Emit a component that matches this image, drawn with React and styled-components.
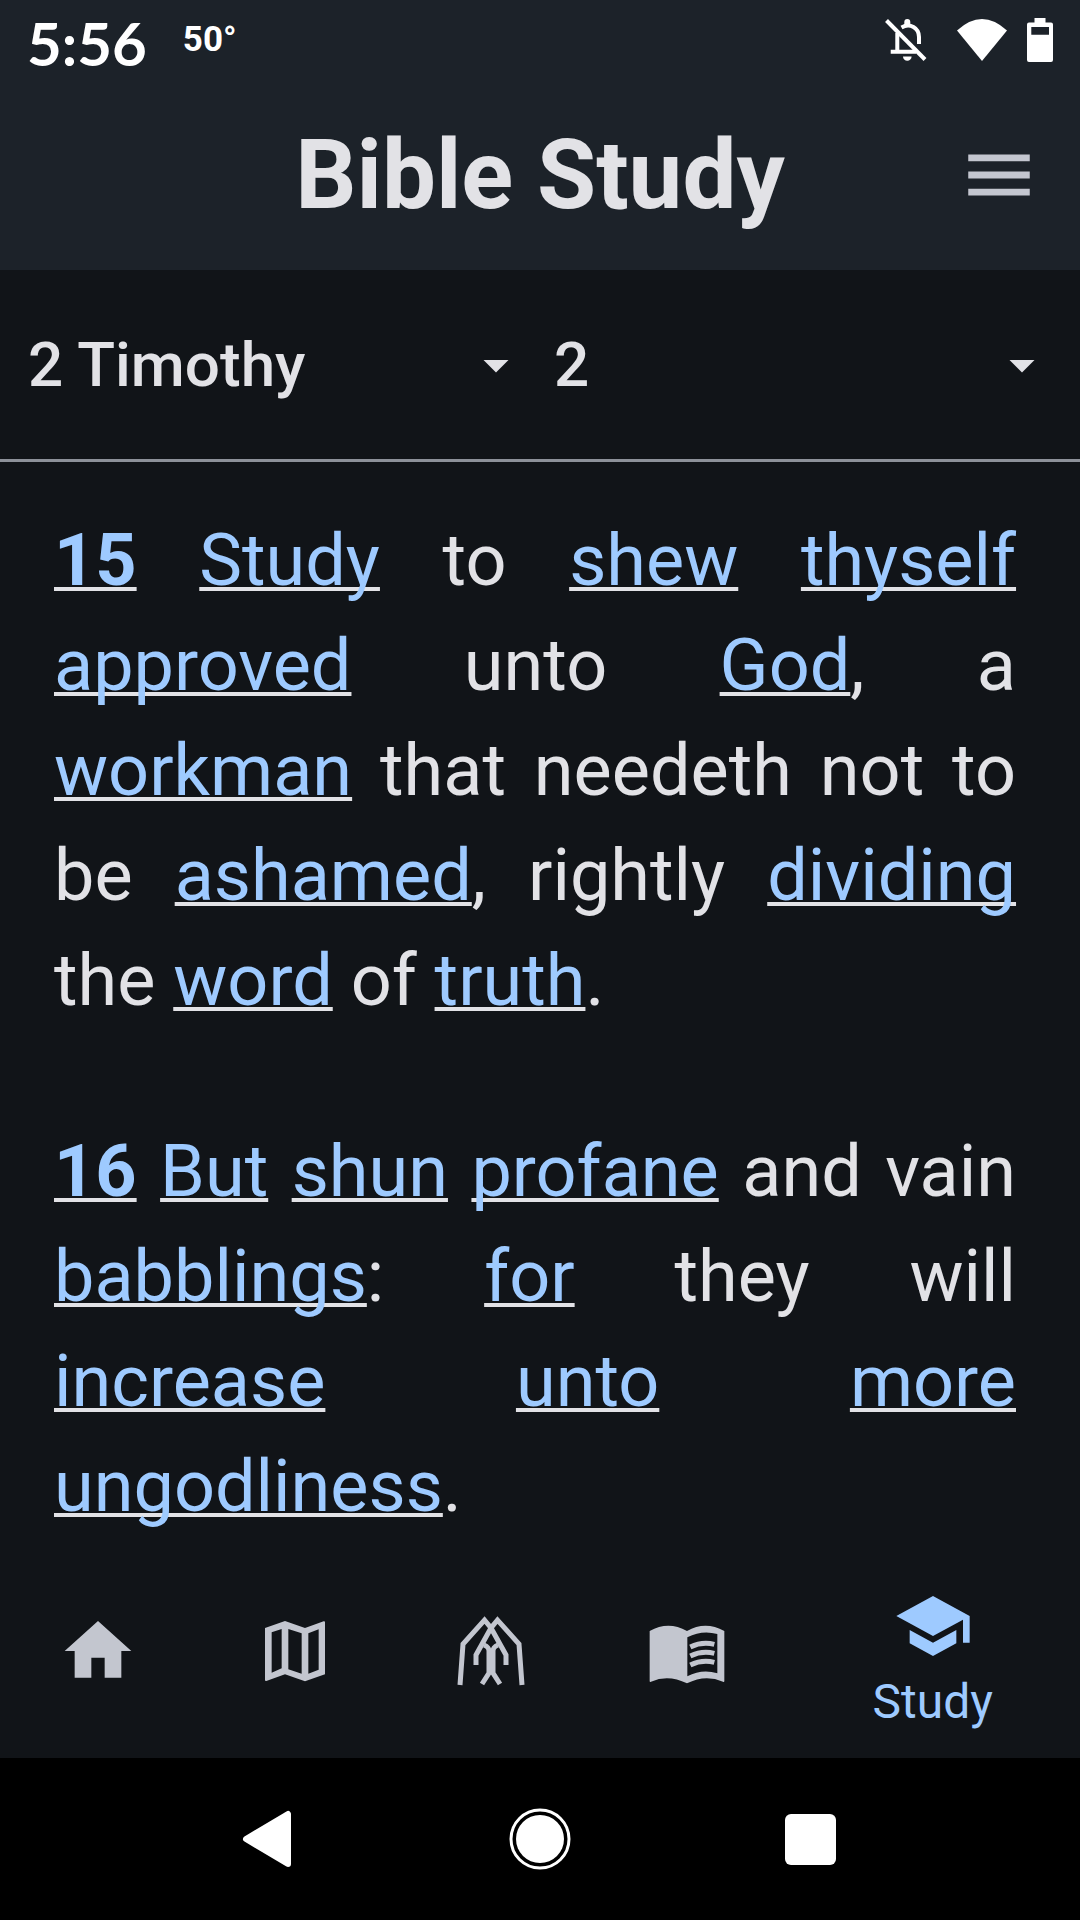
import React from 'react';
import styled, { createGlobalStyle } from 'styled-components';

const color = {
  bar: '#1c2229',
  surface: '#111418',
  text: '#e2e2e6',
  link: '#9ecaff',
  muted: '#c3c6cf',
  outline: '#8d9199',
};

const GlobalStyle = createGlobalStyle`
  *, *::before, *::after { box-sizing: border-box; }
  body { margin: 0; background: ${color.surface}; color: ${color.text}; font-family: Roboto, sans-serif; }
`;

const Screen = styled.div`
  display: flex;
  flex-direction: column;
  min-height: 100vh;
`;

const TopBar = styled.header`
  background: ${color.bar};
`;

const StatusBar = styled.div`
  display: flex;
  align-items: center;
  height: 80px;
  padding: 0 27px;
  color: #fff;
`;

const Clock = styled.time`
  font: 700 60px/72px Lato, sans-serif;
  padding-top: 6px;
`;

const Temperature = styled.span`
  font: 700 35px/40px Roboto, sans-serif;
  margin-left: 36px;
`;

const StatusIcons = styled.div`
  display: flex;
  align-items: center;
  gap: 20px;
  margin-left: auto;
`;

const Glyph = styled.svg`
  display: block;
  flex: none;
  width: ${(p) => p.$w}px;
  height: ${(p) => p.$h || p.$w}px;
  fill: currentColor;
`;

const BellGlyph = styled(Glyph)`
  margin-right: 10px;
`;

const TitleRow = styled.div`
  display: grid;
  grid-template-columns: 1fr auto 1fr;
  align-items: center;
  height: 190px;
  padding: 0 40px;
`;

const Title = styled.h1`
  grid-column: 2;
  margin: 0;
  font-size: 96px;
  line-height: 116px;
  font-weight: 700;
`;

const IconButton = styled.button`
  justify-self: end;
  border: 0;
  padding: 0;
  background: none;
  color: ${color.muted};
  cursor: pointer;
`;

const Pickers = styled.form`
  display: grid;
  grid-template-columns: 1fr 1fr;
  gap: 28px;
  padding: 0 28px;
  border-bottom: 3px solid ${color.outline};
`;

const Picker = styled.label`
  display: grid;
  grid-template-columns: 1fr auto;
  align-items: center;
  height: 189px;
`;

const PickerSelect = styled.select`
  grid-area: 1 / 1 / 2 / 3;
  appearance: none;
  width: 100%;
  border: 0;
  padding: 0;
  background: transparent;
  color: ${color.text};
  font: 500 62px/72px Roboto, sans-serif;
  option { background: ${color.bar}; }
`;

const PickerArrow = styled(Glyph)`
  grid-area: 1 / 2 / 2 / 3;
  color: ${color.text};
  pointer-events: none;
`;

const Passage = styled.main`
  flex: 1;
  padding: 46px 64px 0 54px;
  font-size: 72px;
  line-height: 105px;
`;

const Verse = styled.p`
  margin: 0 0 86px;
  text-align: justify;
  &:last-child { margin-bottom: 0; }
`;

const WordLink = styled.a`
  color: ${color.link};
  font-weight: ${(p) => (p.$strong ? 700 : 400)};
  text-decoration: underline ${color.text} 4px;
  text-underline-offset: 2px;
  text-decoration-skip-ink: none;
`;

const Tabs = styled.nav`
  display: flex;
  height: 215px;
`;

const Tab = styled.a`
  flex: ${(p) => (p.$active ? 3 : 2)} 1 0;
  display: flex;
  flex-direction: column;
  align-items: center;
  justify-content: center;
  gap: 8px;
  padding-top: ${(p) => (p.$active ? 14 : 0)}px;
  color: ${(p) => (p.$active ? color.link : color.muted)};
  font-size: 48px;
  line-height: 56px;
  text-decoration: none;
`;

const SystemBar = styled.footer`
  display: flex;
  height: 162px;
  padding: 0 12.5%;
  background: #000;
`;

const SystemButton = styled.button`
  flex: 1;
  display: grid;
  place-items: center;
  border: 0;
  padding: 0;
  background: none;
  color: #fff;
  cursor: pointer;
`;

const verses = [
  { id: '15', text: '[Study] to [shew] [thyself] [approved] unto [God], a [workman] that needeth not to be [ashamed], rightly [dividing] the [word] of [truth].' },
  { id: '16', text: '[But] [shun] [profane] and vain [babblings]: [for] they will [increase] [unto] [more] [ungodliness].' },
];

const withLinks = (text) =>
  text.split(/(\[[^\]]+\]|\s)/).filter(Boolean).map((part, i) =>
    part.startsWith('[') ? (
      <WordLink key={i} href={`#word-${part.slice(1, -1).toLowerCase()}`}>{part.slice(1, -1)}</WordLink>
    ) : part
  );

const Icon = ({ d, size = 80 }) => (
  <Glyph $w={size} viewBox="0 0 24 24" aria-hidden="true"><path fillRule="evenodd" d={d} /></Glyph>
);

const PrayingHands = () => (
  <Glyph $w={80} viewBox="0 0 80 80" aria-hidden="true">
    <g fill="none" stroke="currentColor" strokeWidth="5">
      <path d="M9 74 12 33 33.500 9 40 17 55 44V54" />
      <path d="M71 74 68 33 46.500 9 40 17 25 44V54" />
      <path d="M31 73 38 62V40Q38 36 33 34" />
      <path d="M49 73 42 62V40Q42 36 47 34" />
    </g>
  </Glyph>
);

const OpenBook = () => (
  <Glyph $w={80} viewBox="0 0 24 24" aria-hidden="true">
    <path
      fillRule="evenodd"
      d="M.8 6Q6.400 2.800 12 6 17.500 2.800 23.200 6V21Q23.200 21.400 22.800 21.200 17.500 18.900 12 21.700 6.400 18.900 1.200 21.200.8 21.400.8 21zM12.100 7.900V19.600Q16.500 17.300 21.100 18.700V6.900Q16.500 5.600 12.100 7.900z"
    />
    <g fill="none" stroke="currentColor" strokeWidth="1.500">
      <path d="M13 10.800Q16.500 9.100 20.200 10" />
      <path d="M13 13.500Q16.500 11.800 20.200 12.700" />
      <path d="M13 16.200Q16.500 14.500 20.200 15.400" />
    </g>
  </Glyph>
);

const BellOff = () => (
  <BellGlyph $w={42} viewBox="0 0 42 42" role="img" aria-label="Notifications off">
    <g fill="none" stroke="currentColor" strokeWidth="4">
      <path d="M1.500 1.500 40 40.500" />
      <path d="M12.300 14V32.700M5.700 32.700H31" />
      <path d="M16.500 8.500C25 3.500 34 9 34 18V25" />
    </g>
    <path d="M19.300 7V3a3 3 0 0 1 6 0V7zM18 37.500h8.600a4.300 4.300 0 0 1-8.600 0z" />
  </BellGlyph>
);

const tabs = [
  { name: 'Home', icon: <Icon d="M10 20v-6h4v6h5v-8h3L12 3 2 12h3v8z" /> },
  { name: 'Maps', icon: <Icon d="M3 5.100 9 3 15 5.100 20.600 3.100Q21 3 21 3.400V19L15 21.100 9 19 3.400 21Q3 21.100 3 20.700zM5 6.400V18.500L8 17.200V5.400zM10 5.400V17.500L14 18.800V6.700zM16 6.700V18.800L19.100 17.600V5.500z" /> },
  { name: 'Prayer', icon: <PrayingHands /> },
  { name: 'Read', icon: <OpenBook /> },
  { name: 'Study', active: true, icon: <Icon d="M5 13.180v4L12 21l7-3.820v-4L12 17l-7-3.820zM12 3 1 9l11 6 9-4.910V17h2V9L12 3z" /> },
];

const pickers = [
  { label: 'Book', value: '2 Timothy' },
  { label: 'Chapter', value: '2' },
];

export default function App() {
  return (
    <Screen>
      <GlobalStyle />
      <TopBar>
        <StatusBar>
          <Clock>5:56</Clock>
          <Temperature>50°</Temperature>
          <StatusIcons>
            <BellOff />
            <Glyph $w={50} $h={42} viewBox="0 0 50 42" role="img" aria-label="Wi-Fi">
              <path d="M0 11.500Q25-11.500 50 11.500L25 42z" />
            </Glyph>
            <Glyph $w={26} $h={44} viewBox="0 0 26 44" role="img" aria-label="Battery">
              <path fillRule="evenodd" d="M7.500 0h11v4.500H24a2 2 0 0 1 2 2V42a2 2 0 0 1-2 2H2a2 2 0 0 1-2-2V6.500a2 2 0 0 1 2-2H7.500zM4.300 9v7.700H22V9z" />
            </Glyph>
          </StatusIcons>
        </StatusBar>
        <TitleRow>
          <Title>Bible Study</Title>
          <IconButton type="button" aria-label="Menu">
            <Icon size={82} d="M3 18h18v-2H3v2zm0-5h18v-2H3v2zm0-7v2h18V6H3z" />
          </IconButton>
        </TitleRow>
      </TopBar>
      <Pickers>
        {pickers.map((p) => (
          <Picker key={p.label}>
            <PickerSelect aria-label={p.label} defaultValue={p.value}>
              <option>{p.value}</option>
            </PickerSelect>
            <PickerArrow $w={60} viewBox="0 0 24 24" aria-hidden="true"><path d="M7 10l5 5 5-5z" /></PickerArrow>
          </Picker>
        ))}
      </Pickers>
      <Passage>
        {verses.map((v) => (
          <Verse key={v.id}>
            <WordLink href={`#verse-${v.id}`} $strong>{v.id}</WordLink> {withLinks(v.text)}
          </Verse>
        ))}
      </Passage>
      <Tabs>
        {tabs.map((t) => (
          <Tab key={t.name} href={`#${t.name.toLowerCase()}`} aria-label={t.name} $active={t.active}>
            {t.icon}
            {t.active && <span>{t.name}</span>}
          </Tab>
        ))}
      </Tabs>
      <SystemBar>
        <SystemButton type="button" aria-label="Back">
          <Glyph $w={60} viewBox="0 0 60 60">
            <path d="M6 30 48 5V55z" stroke="currentColor" strokeWidth="6" strokeLinejoin="round" />
          </Glyph>
        </SystemButton>
        <SystemButton type="button" aria-label="Home screen">
          <Glyph $w={62} viewBox="0 0 62 62">
            <circle cx="31" cy="31" r="24" />
            <circle cx="31" cy="31" r="29" fill="none" stroke="currentColor" strokeWidth="3" />
          </Glyph>
        </SystemButton>
        <SystemButton type="button" aria-label="Recent apps">
          <Glyph $w={51} viewBox="0 0 51 51"><rect width="51" height="51" rx="6" /></Glyph>
        </SystemButton>
      </SystemBar>
    </Screen>
  );
}
